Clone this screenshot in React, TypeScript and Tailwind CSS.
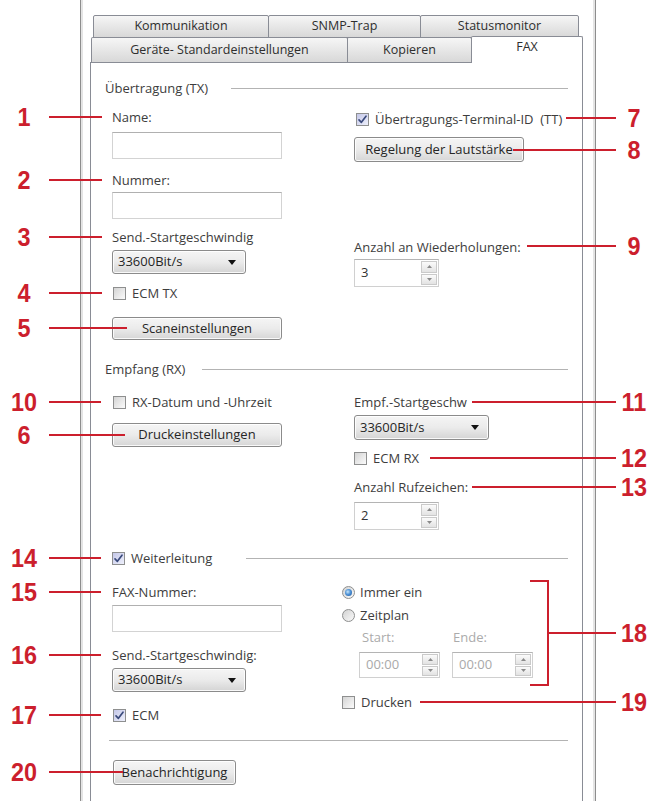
import React from "react";

const label = "h-[18px] whitespace-nowrap text-[13px] leading-[18px] text-[#3d3d3d]";
const dim = "h-[18px] whitespace-nowrap text-[13px] leading-[18px] text-[#ababab]";

function Box({ checked = false }: { checked?: boolean }) {
  return (
    <span
      className={
        checked
          ? "flex h-[13px] w-[13px] shrink-0 items-center justify-center border border-[#8e8f8f] bg-gradient-to-br from-[#c4c7e8] to-[#eef0fb]"
          : "flex h-[13px] w-[13px] shrink-0 items-center justify-center border border-[#8e8f8f] bg-gradient-to-br from-[#d4d4d4] to-[#fbfbfb]"
      }
    >
      {checked && (
        <svg width="11" height="11" viewBox="0 0 11 11">
          <path
            d="M2 5.8 L4.4 8.3 L9 2.2"
            fill="none"
            stroke="#3a4a7c"
            strokeWidth="1.7"
            strokeLinecap="round"
            strokeLinejoin="round"
          />
        </svg>
      )}
    </span>
  );
}

function CheckRow({
  checked = false,
  children,
  className = "",
}: {
  checked?: boolean;
  children: React.ReactNode;
  className?: string;
}) {
  return (
    <div className={`flex h-[18px] items-center gap-[6px] ${className}`}>
      <Box checked={checked} />
      <span className="whitespace-nowrap text-[13px] leading-[18px] text-[#3d3d3d]">{children}</span>
    </div>
  );
}

function Radio({ on = false, children, className = "" }: { on?: boolean; children: React.ReactNode; className?: string }) {
  return (
    <div className={`flex h-[18px] items-center gap-[5px] ${className}`}>
      <span className="flex h-[13px] w-[13px] shrink-0 items-center justify-center rounded-full border border-[#8e8f8f] bg-gradient-to-br from-[#d2d2d2] to-[#fafafa]">
        {on && (
          <span className="h-[7px] w-[7px] rounded-full bg-[radial-gradient(circle_at_40%_40%,#c8e6fb_0%,#4f93d6_45%,#18529c_100%)]" />
        )}
      </span>
      <span className="whitespace-nowrap text-[13px] leading-[18px] text-[#3d3d3d]">{children}</span>
    </div>
  );
}

function Btn({ children, className = "" }: { children: React.ReactNode; className?: string }) {
  return (
    <div
      className={`flex items-center justify-center rounded-[3px] border border-[#8b8b8b] bg-gradient-to-b from-[#f5f5f5] via-[#ebebeb] to-[#d6d6d6] text-[13px] text-[#262626] shadow-[inset_0_0_0_1px_rgba(255,255,255,0.85)] ${className}`}
    >
      {children}
    </div>
  );
}

function Select({ className = "" }: { className?: string }) {
  return (
    <div
      className={`flex items-center justify-between rounded-[3px] border border-[#8b8b8b] bg-gradient-to-b from-[#f5f5f5] via-[#ebebeb] to-[#d4d4d4] pl-[5px] pr-[9px] text-[13px] text-[#262626] shadow-[inset_0_0_0_1px_rgba(255,255,255,0.85)] ${className}`}
    >
      <span>33600Bit/s</span>
      <svg width="8" height="5" viewBox="0 0 8 5">
        <path d="M0 0h8L4 5z" fill="#111" />
      </svg>
    </div>
  );
}

function Field({ className = "" }: { className?: string }) {
  return <div className={`border border-[#d3d3d3] border-t-[#b0b0b0] bg-white ${className}`} />;
}

function Spin({ value, disabled = false, className = "" }: { value: string; disabled?: boolean; className?: string }) {
  return (
    <div className={`flex border border-[#d0d0d0] border-t-[#b4b4b4] bg-white ${className}`}>
      <span
        className={
          disabled
            ? "flex flex-1 items-center pl-[6px] text-[13px] text-[#a9a9a9]"
            : "flex flex-1 items-center pl-[6px] text-[13px] text-[#333]"
        }
      >
        {value}
      </span>
      <div className="my-[1px] mr-[1px] flex w-[16px] flex-col gap-px">
        <div className="flex flex-1 items-center justify-center border border-[#cacaca] bg-gradient-to-b from-[#fbfbfb] to-[#e3e3e3]">
          <svg width="5" height="3" viewBox="0 0 5 3">
            <path d="M0 3h5L2.5 0z" fill="#8a8a8a" />
          </svg>
        </div>
        <div className="flex flex-1 items-center justify-center border border-[#cacaca] bg-gradient-to-b from-[#fbfbfb] to-[#e3e3e3]">
          <svg width="5" height="3" viewBox="0 0 5 3">
            <path d="M0 0h5L2.5 3z" fill="#8a8a8a" />
          </svg>
        </div>
      </div>
    </div>
  );
}

function Heading({ children, gap }: { children: React.ReactNode; gap: string }) {
  return (
    <div className="flex h-[18px] items-center">
      {children}
      <div className={`h-px flex-1 bg-[#b3b3b3] ${gap}`} />
    </div>
  );
}

const tab =
  "flex items-center justify-center rounded-t-[2px] border border-[#898c95] bg-gradient-to-b from-[#f6f6f6] to-[#d8d8d8] text-[12.5px] text-[#2e2e2e] whitespace-nowrap";

function Tabs() {
  return (
    <>
      <div className="ml-[3px] flex h-[23px]">
        <div className={`${tab} w-[176px]`}>Kommunikation</div>
        <div className={`${tab} -ml-px w-[153px]`}>SNMP-Trap</div>
        <div className={`${tab} -ml-px w-[159px]`}>Statusmonitor</div>
      </div>
      <div className="relative z-10 -mt-[2px] ml-[1px] flex h-[26px] items-end">
        <div className={`${tab} h-[25px] w-[257px] border-b-0`}>Geräte- Standardeinstellungen</div>
        <div className={`${tab} -ml-px h-[25px] w-[125px] border-b-0`}>Kopieren</div>
        <div className="-mb-px -ml-px flex h-[27px] w-[112px] justify-center rounded-t-[2px] border border-b-0 border-[#898c95] bg-white pt-[1px] text-[12.5px] leading-[18px] text-[#2e2e2e]">
          FAX
        </div>
      </div>
    </>
  );
}

function Panel() {
  return (
    <div className="h-[760px] border border-[#898c95] bg-white pl-[14px] pr-[14px] pt-[16px]">
      {/* Übertragung */}
      <Heading gap="ml-[23px]">
        <span className={label}>Übertragung (TX)</span>
      </Heading>
      <div className="ml-[7px] grid grid-cols-[242px_1fr]">
        <div className="flex flex-col">
          <div className={`${label} mt-[11px]`}>Name:</div>
          <Field className="mt-[6px] h-[27px] w-[170px]" />
          <div className={`${label} mt-[12px]`}>Nummer:</div>
          <Field className="mt-[3px] h-[27px] w-[170px]" />
          <div className={`${label} mt-[9px]`}>Send.-Startgeschwindig</div>
          <Select className="mt-[4px] h-[24px] w-[134px]" />
          <CheckRow className="mt-[10px] pl-px">ECM TX</CheckRow>
          <Btn className="mt-[15px] h-[23px] w-[170px]">Scaneinstellungen</Btn>
        </div>
        <div className="flex flex-col">
          <CheckRow checked className="mt-[13px] pl-[2px]">
            Übertragungs-Terminal-ID&nbsp; (TT)
          </CheckRow>
          <Btn className="mt-[9px] h-[25px] w-[170px]">Regelung der Lautstärke</Btn>
          <div className={`${label} mt-[76px]`}>Anzahl an Wiederholungen:</div>
          <Spin value="3" className="mt-[3px] h-[28px] w-[85px]" />
        </div>
      </div>

      {/* Empfang */}
      <div className="mt-[20px]">
        <Heading gap="ml-[17px]">
          <span className={label}>Empfang (RX)</span>
        </Heading>
      </div>
      <div className="ml-[7px] grid grid-cols-[242px_1fr]">
        <div className="flex flex-col">
          <CheckRow className="mt-[15px] pl-px">RX-Datum und -Uhrzeit</CheckRow>
          <Btn className="mt-[12px] h-[24px] w-[170px]">Druckeinstellungen</Btn>
        </div>
        <div className="flex flex-col">
          <div className={`${label} mt-[15px]`}>Empf.-Startgeschw</div>
          <Select className="mt-[4px] h-[25px] w-[135px]" />
          <CheckRow className="mt-[9px]">ECM RX</CheckRow>
          <div className={`${label} mt-[11px]`}>Anzahl Rufzeichen:</div>
          <Spin value="2" className="mt-[6px] h-[28px] w-[85px]" />
        </div>
      </div>

      {/* Weiterleitung */}
      <div className="ml-[7px] mt-[19px]">
        <Heading gap="ml-[34px]">
          <CheckRow checked>Weiterleitung</CheckRow>
        </Heading>
      </div>
      <div className="ml-[7px] grid grid-cols-[230px_1fr]">
        <div className="flex flex-col">
          <div className={`${label} mt-[16px]`}>FAX-Nummer:</div>
          <Field className="mt-[4px] h-[27px] w-[170px]" />
          <div className={`${label} mt-[14px]`}>Send.-Startgeschwindig:</div>
          <Select className="mt-[4px] h-[24px] w-[134px]" />
          <CheckRow checked className="mt-[14px] pl-px">
            ECM
          </CheckRow>
        </div>
        <div className="flex flex-col">
          <Radio on className="mt-[16px]">
            Immer ein
          </Radio>
          <Radio className="mt-[5px]">Zeitplan</Radio>
          <div className="mt-[4px] flex pl-[20px]">
            <span className={`${dim} w-[91px]`}>Start:</span>
            <span className={dim}>Ende:</span>
          </div>
          <div className="ml-[17px] mt-[6px] flex gap-[12px]">
            <Spin value="00:00" disabled className="h-[26px] w-[81px]" />
            <Spin value="00:00" disabled className="h-[26px] w-[81px]" />
          </div>
          <CheckRow className="mt-[15px]">Drucken</CheckRow>
        </div>
      </div>

      <div className="ml-[4px] mt-[16px] h-px bg-[#b3b3b3]" />
      <Btn className="ml-[8px] mt-[19px] h-[25px] w-[123px]">Benachrichtigung</Btn>
    </div>
  );
}

type Note = { n: string; y: number; x: number };

// left-hand callouts: line runs from the number to x
const leftNotes: Note[] = [
  { n: "1", y: 117, x: 102 },
  { n: "2", y: 180, x: 102 },
  { n: "3", y: 237, x: 102 },
  { n: "4", y: 293, x: 102 },
  { n: "5", y: 328, x: 127 },
  { n: "10", y: 402, x: 101 },
  { n: "6", y: 435, x: 125 },
  { n: "14", y: 558, x: 101 },
  { n: "15", y: 592, x: 101 },
  { n: "16", y: 655, x: 101 },
  { n: "17", y: 715, x: 101 },
  { n: "20", y: 772, x: 123 },
];

// right-hand callouts: line runs from x to the number
const rightNotes: Note[] = [
  { n: "7", y: 118, x: 566 },
  { n: "8", y: 150, x: 513 },
  { n: "9", y: 246, x: 527 },
  { n: "11", y: 402, x: 472 },
  { n: "12", y: 458, x: 430 },
  { n: "13", y: 487, x: 472 },
  { n: "19", y: 702, x: 420 },
];

const num =
  "absolute h-[24px] scale-x-[0.9] text-center font-['Liberation_Sans_Narrow','Liberation_Sans',Arial,sans-serif] text-[26px] font-bold leading-[24px] text-[#cc1f2d]";

function Callouts() {
  return (
    <div className="pointer-events-none absolute inset-0 z-20">
      {leftNotes.map((c) => (
        <React.Fragment key={c.n}>
          <div className={`${num} left-0 w-[48px]`} style={{ top: c.y - 12 }}>
            {c.n}
          </div>
          <div className="absolute left-[49px] h-[2px] bg-[#cc1f2d]" style={{ top: c.y - 1, width: c.x - 49 }} />
        </React.Fragment>
      ))}
      {rightNotes.map((c) => (
        <React.Fragment key={c.n}>
          <div className="absolute h-[2px] bg-[#cc1f2d]" style={{ top: c.y - 1, left: c.x, width: 616 - c.x }} />
          <div className={`${num} left-[616px] w-[36px]`} style={{ top: c.y - 12 }}>
            {c.n}
          </div>
        </React.Fragment>
      ))}
      {/* bracket around the schedule options */}
      <div className="absolute left-[530px] top-[580px] h-[2px] w-[19px] bg-[#cc1f2d]" />
      <div className="absolute left-[547px] top-[580px] h-[106px] w-[2px] bg-[#cc1f2d]" />
      <div className="absolute left-[530px] top-[684px] h-[2px] w-[19px] bg-[#cc1f2d]" />
      <div className="absolute left-[547px] top-[632px] h-[2px] w-[69px] bg-[#cc1f2d]" />
      <div className={`${num} left-[616px] top-[621px] w-[36px]`}>18</div>
    </div>
  );
}

export default function App() {
  return (
    <div className="relative h-[801px] w-[662px] overflow-hidden bg-white font-['Open_Sans','Noto_Sans',sans-serif]">
      <div className="flex h-full">
        <div className="w-[80px] shrink-0" />
        <div className="h-full w-[516px] shrink-0 border-x border-[#8d8d8d] pl-[9px] pt-[15px] shadow-[inset_2px_0_0_#e4e4e4,inset_-2px_0_0_#e4e4e4]">
          <div className="w-[493px]">
            <Tabs />
            <Panel />
          </div>
        </div>
      </div>
      <Callouts />
    </div>
  );
}
